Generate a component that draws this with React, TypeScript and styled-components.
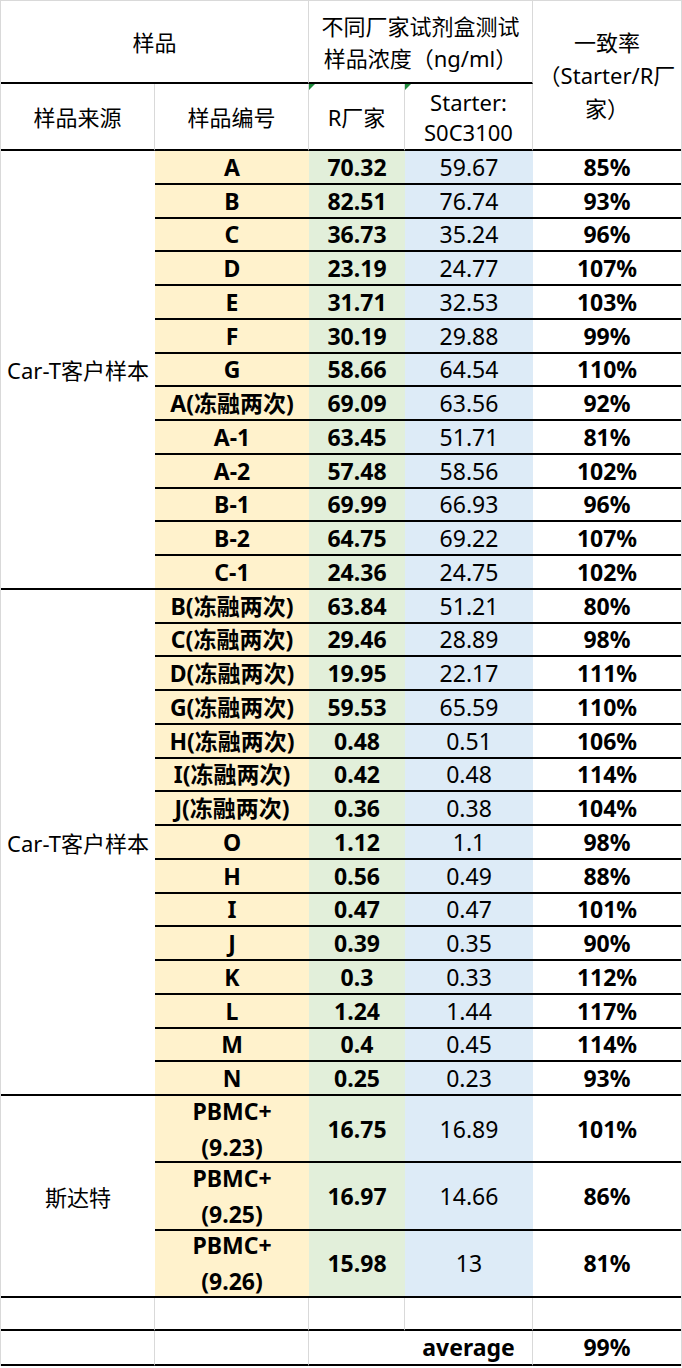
import React from 'react';
import styled, { createGlobalStyle, css } from 'styled-components';

const Global = createGlobalStyle`
  html, body {
    margin: 0;
    padding: 0;
    background: #ffffff;
  }
  body {
    font-family: "Noto Sans", "Noto Sans CJK SC", sans-serif;
    color: #000;
  }
`;

type Tone = 'gold' | 'green' | 'blue' | 'none';

const fills: Record<Tone, string> = {
  gold: '#fff2cc',
  green: '#e2efda',
  blue: '#ddebf7',
  none: '#ffffff',
};

const GRID = '#d9d9d9';

const Sheet = styled.div<{ $rows: string }>`
  width: 682px;
  box-sizing: border-box;
  border-top: 1px solid ${GRID};
  border-left: 1px solid ${GRID};
  border-right: 1px solid ${GRID};
  display: grid;
  grid-template-columns: 154px 154px 96px 128px 148px;
  grid-template-rows: ${({ $rows }) => $rows};
  font-size: 22px;
`;

const centered = css`
  display: flex;
  align-items: center;
  justify-content: center;
  text-align: center;
  box-sizing: border-box;
`;

const HeadCell = styled.div<{ $col: string; $row: string; $lineBelow?: boolean; $noRight?: boolean }>`
  ${centered};
  grid-column: ${({ $col }) => $col};
  grid-row: ${({ $row }) => $row};
  border-right: ${({ $noRight }) => ($noRight ? 'none' : `1px solid ${GRID}`)};
  border-bottom: 2px solid ${({ $lineBelow }) => ($lineBelow ? '#000' : 'transparent')};
  line-height: 32px;
  position: relative;
`;

const HeadLines = styled.span<{ $lh: number }>`
  line-height: ${({ $lh }) => $lh}px;
`;

const Note = styled.span`
  position: absolute;
  top: 0;
  left: 0;
  width: 0;
  height: 0;
  border-top: 6px solid #1e8a3c;
  border-right: 6px solid transparent;
`;

const GroupCell = styled.div<{ $span: number }>`
  ${centered};
  grid-column: 1;
  grid-row: span ${({ $span }) => $span};
  border-bottom: 2px solid #000;
  white-space: nowrap;
`;

const Cell = styled.div<{ $tone?: Tone; $bold?: boolean; $grid?: boolean }>`
  ${centered};
  background: ${({ $tone }) => fills[$tone || 'none']};
  font-weight: ${({ $bold }) => ($bold ? 700 : 400)};
  font-size: 23px;
  border-bottom: 2px solid #000;
  border-right: ${({ $grid }) => ($grid ? `1px solid ${GRID}` : 'none')};
  line-height: 36px;
  white-space: nowrap;
`;

type Row = [string, string, string, string];

const groups: { label: string; rows: Row[]; tall?: boolean }[] = [
  {
    label: 'Car-T客户样本',
    rows: [
      ['A', '70.32', '59.67', '85%'],
      ['B', '82.51', '76.74', '93%'],
      ['C', '36.73', '35.24', '96%'],
      ['D', '23.19', '24.77', '107%'],
      ['E', '31.71', '32.53', '103%'],
      ['F', '30.19', '29.88', '99%'],
      ['G', '58.66', '64.54', '110%'],
      ['A(冻融两次)', '69.09', '63.56', '92%'],
      ['A-1', '63.45', '51.71', '81%'],
      ['A-2', '57.48', '58.56', '102%'],
      ['B-1', '69.99', '66.93', '96%'],
      ['B-2', '64.75', '69.22', '107%'],
      ['C-1', '24.36', '24.75', '102%'],
    ],
  },
  {
    label: 'Car-T客户样本',
    rows: [
      ['B(冻融两次)', '63.84', '51.21', '80%'],
      ['C(冻融两次)', '29.46', '28.89', '98%'],
      ['D(冻融两次)', '19.95', '22.17', '111%'],
      ['G(冻融两次)', '59.53', '65.59', '110%'],
      ['H(冻融两次)', '0.48', '0.51', '106%'],
      ['I(冻融两次)', '0.42', '0.48', '114%'],
      ['J(冻融两次)', '0.36', '0.38', '104%'],
      ['O', '1.12', '1.1', '98%'],
      ['H', '0.56', '0.49', '88%'],
      ['I', '0.47', '0.47', '101%'],
      ['J', '0.39', '0.35', '90%'],
      ['K', '0.3', '0.33', '112%'],
      ['L', '1.24', '1.44', '117%'],
      ['M', '0.4', '0.45', '114%'],
      ['N', '0.25', '0.23', '93%'],
    ],
  },
  {
    label: '斯达特',
    tall: true,
    rows: [
      ['PBMC+\n(9.23)', '16.75', '16.89', '101%'],
      ['PBMC+\n(9.25)', '16.97', '14.66', '86%'],
      ['PBMC+\n(9.26)', '15.98', '13', '81%'],
    ],
  },
];

const multiline = (text: string) =>
  text.split('\n').map((part, i) => (
    <React.Fragment key={i}>
      {i > 0 && <br />}
      {part}
    </React.Fragment>
  ));

export default function App() {
  const heights: string[] = ['83px', '67px'];
  groups.forEach((g) => g.rows.forEach(() => heights.push(g.tall ? '67.33px' : '33.75px')));
  heights.push('33px', '35px');

  return (
    <>
      <Global />
      <Sheet $rows={heights.join(' ')}>
        <HeadCell $col="1 / 3" $row="1" $lineBelow>样品</HeadCell>
        <HeadCell $col="3 / 5" $row="1" $lineBelow>
          不同厂家试剂盒测试
          <br />
          样品浓度（ng/ml）
        </HeadCell>
        <HeadCell $col="5" $row="1 / 3" $lineBelow $noRight>
          <HeadLines $lh={33}>
            一致率
            <br />
            （Starter/R厂
            <br />
            家）
          </HeadLines>
        </HeadCell>
        <HeadCell $col="1" $row="2" $lineBelow>样品来源</HeadCell>
        <HeadCell $col="2" $row="2" $lineBelow>样品编号</HeadCell>
        <HeadCell $col="3" $row="2" $lineBelow>
          <Note />
          R厂家
        </HeadCell>
        <HeadCell $col="4" $row="2" $lineBelow>
          <Note />
          <HeadLines $lh={30}>
            Starter:
            <br />
            S0C3100
          </HeadLines>
        </HeadCell>

        {groups.map((g, gi) => (
          <React.Fragment key={gi}>
            <GroupCell $span={g.rows.length}>{g.label}</GroupCell>
            {g.rows.map(([id, r, s, ratio], ri) => (
              <React.Fragment key={ri}>
                <Cell $tone="gold" $bold>{multiline(id)}</Cell>
                <Cell $tone="green" $bold>{r}</Cell>
                <Cell $tone="blue">{s}</Cell>
                <Cell $bold>{ratio}</Cell>
              </React.Fragment>
            ))}
          </React.Fragment>
        ))}

        <Cell $grid />
        <Cell $grid />
        <Cell $grid />
        <Cell $grid />
        <Cell />

        <Cell $grid />
        <Cell $grid />
        <Cell />
        <Cell $bold $grid>average</Cell>
        <Cell $bold>99%</Cell>
      </Sheet>
    </>
  );
}
